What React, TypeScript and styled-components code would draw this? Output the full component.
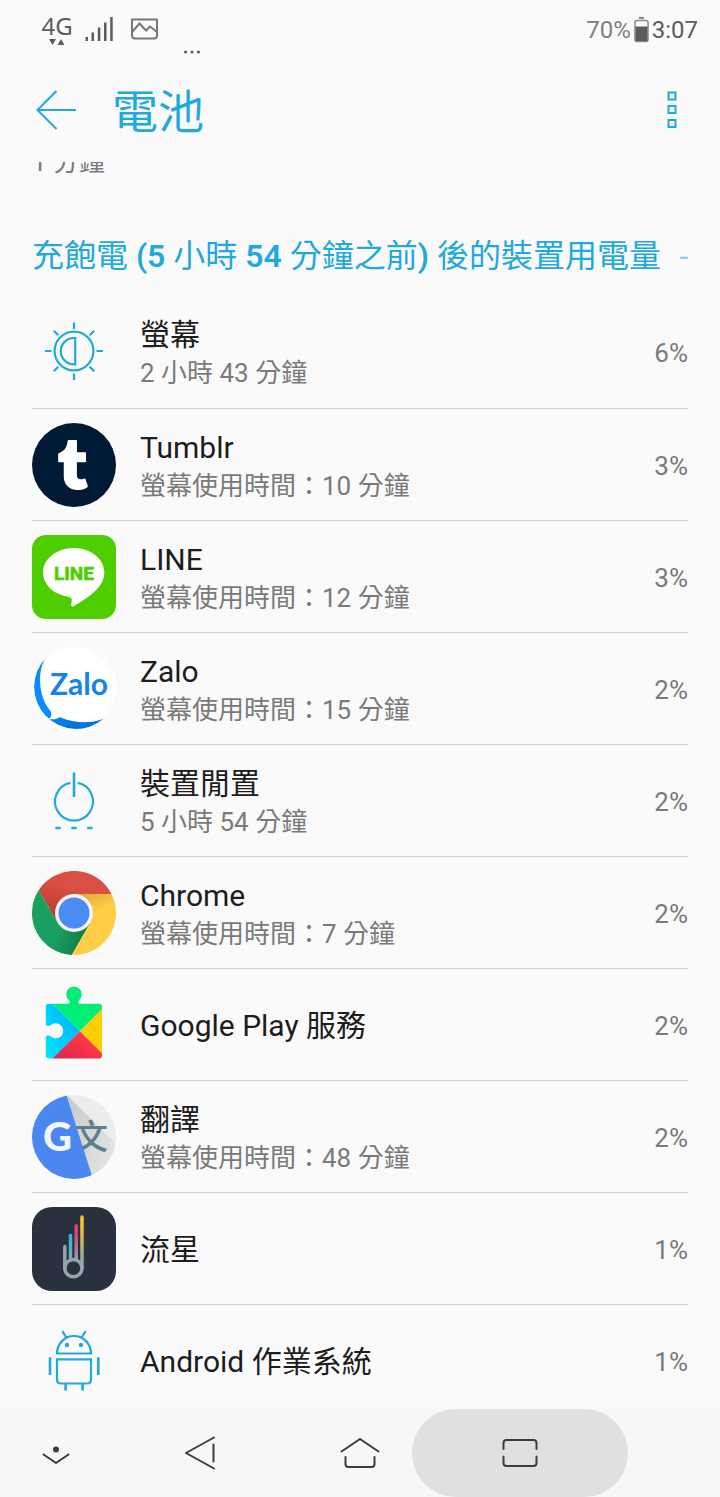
import React from "react";
import styled, { createGlobalStyle } from "styled-components";
import { FaTumblr } from "react-icons/fa";

const ACCENT = "#1fa9dc";
const INK = "#1d1d1d";
const MUTED = "#7a7a7a";

const GlobalStyle = createGlobalStyle`
  * { box-sizing: border-box; }
  html, body { margin: 0; background: #fafafa; }
  body { font-family: Roboto, "Noto Sans CJK TC", sans-serif; color: ${INK}; }
  button { font: inherit; color: inherit; border: 0; background: none; padding: 0; cursor: pointer; }
  svg { display: block; }
`;

const Screen = styled.div`
  display: flex;
  flex-direction: column;
  height: 100vh;
  background: #fafafa;
`;

const StatusBar = styled.div`
  flex: none;
  display: flex;
  justify-content: space-between;
  height: 58px;
  padding: 0 22px 0 43px;
  color: #5c5c5c;
`;

const StatusLeft = styled.div`
  display: flex;
  align-items: center;
  gap: 14px;
`;

const StatusRight = styled.div`
  display: flex;
  align-items: center;
  gap: 3px;
  padding-top: 2px;
  font-size: 24px;
  line-height: 28px;
`;

const BatteryLevel = styled.span`
  color: #808080;
`;

const Network = styled.div`
  display: flex;
  flex-direction: column;
  align-items: center;
  width: 28px;
  font: 24px/26px "Noto Sans", sans-serif;
`;

const MoreDots = styled.svg`
  align-self: flex-end;
`;

const AppBar = styled.header`
  flex: none;
  display: flex;
  align-items: center;
  height: 104px;
  padding: 0 28px 0 32px;
  color: ${ACCENT};
`;

const BarButton = styled.button`
  display: grid;
  place-items: center;
  width: 48px;
  height: 48px;
  &:last-child { width: 40px; }
`;

const Title = styled.h1`
  flex: 1;
  margin: 0;
  padding: 4px 0 0 32px;
  font-size: 46px;
  line-height: 56px;
  font-weight: 400;
`;

const Content = styled.main`
  flex: 1;
  min-height: 0;
  overflow-y: auto;
  scrollbar-width: none;
  padding: 0 32px;
`;

const ScrolledLine = styled.div`
  display: flex;
  align-items: flex-end;
  height: 18px;
  overflow: hidden;
  color: ${MUTED};
  font-size: 26px;
  line-height: 36px;
`;

const SectionTitle = styled.h2`
  display: flex;
  justify-content: space-between;
  margin: 56px 0 20px;
  color: ${ACCENT};
  font-size: 32px;
  line-height: 40px;
  font-weight: 400;
  white-space: nowrap;
  strong { font-weight: 600; }
`;

const Fading = styled.span`
  opacity: 0.5;
`;

const List = styled.ul`
  list-style: none;
  margin: 0;
  padding: 0;
`;

const Row = styled.li`
  display: flex;
  align-items: center;
  height: 112px;
  border-bottom: 1px solid #d0d0d0;
  &:first-child { height: 113px; }
  &:last-child { border-bottom: 0; }
`;

const RowIcon = styled.svg.attrs({ width: 84, height: 84, viewBox: "0 0 84 84", "aria-hidden": true })`
  flex: none;
`;

const RowText = styled.div`
  flex: 1;
  min-width: 0;
  padding: 2px 0 0 24px;
`;

const Name = styled.div`
  font-size: 30px;
  line-height: 40px;
`;

const Detail = styled.div`
  color: ${MUTED};
  font-size: 26px;
  line-height: 36px;
`;

const Percent = styled.span`
  padding-top: 2px;
  color: ${MUTED};
  font-size: 26px;
  line-height: 36px;
`;

const NavBar = styled.nav`
  flex: none;
  display: grid;
  grid-template-columns: 3fr 4fr 4fr 4fr 3fr;
  height: 88px;
  background: #f7f7f7;
  color: #3c3c3c;
`;

const NavButton = styled.button<{ $pressed?: boolean; $start?: boolean }>`
  display: grid;
  align-items: center;
  justify-content: ${(p) => (p.$start ? "start" : "center")};
  padding-left: ${(p) => (p.$start ? "40px" : "0")};
  margin: ${(p) => (p.$pressed ? "0 -28px" : "0")};
  border-radius: 44px;
  background: ${(p) => (p.$pressed ? "#e0e0e0" : "transparent")};
`;

const ScreenIcon = () => (
  <RowIcon fill="none" stroke={ACCENT} strokeWidth="2.2">
    <circle cx="42" cy="41" r="19.4" />
    <path d="M43.2 28V54.4H42A13.2 13.2 0 0 1 42 28Z" />
    <path d="M42 12.5V19M42 63.5V70M13 41H19.5M64.5 41H71M21.8 20.8L26.3 25.3M62.2 20.8L57.7 25.3M21.8 61.2L26.3 56.7M62.2 61.2L57.7 56.7" />
  </RowIcon>
);

const TumblrIcon = () => (
  <RowIcon>
    <circle cx="42" cy="42" r="42" fill="#001935" />
    <FaTumblr x="16" y="17" size={50} color="#fff" />
  </RowIcon>
);

const LineIcon = () => (
  <RowIcon>
    <rect width="84" height="84" rx="14" fill="#4ecd00" />
    <path
      fill="#fff"
      d="M41.7 13C24.8 13 11 24 11 37.6C11 49.7 22 59.8 37 61.9C39.3 62.4 40 63.2 39.7 65.5L39.2 69.5C39 71.4 40.2 72 42 70.9C50 66.4 60 60 66.5 52.5C70.3 48.2 72.4 43 72.4 37.6C72.4 24 58.6 13 41.7 13Z"
    />
    <text
      x="42"
      y="45"
      textAnchor="middle"
      fontFamily="Roboto"
      fontWeight="700"
      fontSize="19"
      fill="#4ecd00"
      stroke="#4ecd00"
      strokeWidth="0.6"
      strokeLinejoin="round"
    >
      LINE
    </text>
  </RowIcon>
);

const ZaloIcon = () => (
  <RowIcon>
    <defs>
      <linearGradient id="zalo" x1="0" y1="0.4" x2="0.5" y2="1">
        <stop offset="0.5" stopColor="#0a8bff" />
        <stop offset="1" stopColor="#0374de" />
      </linearGradient>
    </defs>
    <circle cx="42" cy="42" r="42" fill="#fff" />
    <path
      fill="url(#zalo)"
      d="M13.7 11C5.500 23 5.500 49 18.500 64C20 67 19.500 70 17 71.800C21 73 25 72 28 70.300C42 76 58 77.200 71.500 71.800A42 42 0 0 1 13.700 11Z"
    />
    <text x="47" y="47.5" textAnchor="middle" fontFamily="Lato" fontWeight="700" fontSize="30" fill="#1583ea">
      Zalo
    </text>
  </RowIcon>
);

const IdleIcon = () => (
  <RowIcon fill="none" stroke={ACCENT} strokeWidth="2.2">
    <path d="M38.3 23.9A19 19 0 1 0 45.7 23.9" />
    <path d="M42 13.5V38" strokeWidth="2.6" />
    <path d="M23.3 69H28.7M39.3 69H44.7M55.2 69H60.6" strokeWidth="2.6" />
  </RowIcon>
);

const ChromeIcon = () => (
  <RowIcon>
    <defs>
      <linearGradient id="chromeRed" x1="0.1" y1="0.9" x2="0.4" y2="0.3">
        <stop offset="0" stopColor="#b43a2e" />
        <stop offset="1" stopColor="#da4f43" />
      </linearGradient>
      <linearGradient id="chromeYellow" x1="0.4" y1="0" x2="0.5" y2="0.3">
        <stop offset="0" stopColor="#e6ae3e" />
        <stop offset="1" stopColor="#ffcd46" />
      </linearGradient>
      <linearGradient id="chromeGreen" x1="1" y1="0.7" x2="0.5" y2="0.5">
        <stop offset="0" stopColor="#0f7544" />
        <stop offset="1" stopColor="#1b9f60" />
      </linearGradient>
    </defs>
    <path fill="url(#chromeGreen)" d="M39.8 83.9A42 42 0 0 1 6.8 19L25.5 51.5H58.5Z" />
    <path fill="url(#chromeYellow)" d="M79.5 23A42 42 0 0 1 39.8 83.9L58.5 51.5L42 23Z" />
    <path fill="url(#chromeRed)" d="M6.8 19A42 42 0 0 1 79.5 23H42L25.5 51.5Z" />
    <circle cx="42" cy="42" r="19" fill="#f3f3f3" />
    <circle cx="42" cy="42" r="15.5" fill="#4b8bf4" />
  </RowIcon>
);

const PlayServicesIcon = () => (
  <RowIcon>
    <defs>
      <clipPath id="puzzle">
        <path d="M17 20.8H36C37.5 20.8 37.8 19.5 37.2 17.4A7.8 7.8 0 1 1 46.8 17.4C46.2 19.5 46.5 20.8 48 20.8H67Q70 20.8 70 23.8V72.5Q70 75.5 67 75.5H17Q13.8 75.5 13.8 72.5V54.5C13.8 52.6 16.5 52.2 18.3 53A7.5 7.5 0 1 0 18.3 42.6C16.5 43.4 13.8 43 13.8 41.1V23.8Q13.8 20.8 17 20.8Z" />
      </clipPath>
      <linearGradient id="playBlue" x1="1" y1="0" x2="0" y2="0.8">
        <stop offset="0" stopColor="#00a9ff" />
        <stop offset="1" stopColor="#00e1ff" />
      </linearGradient>
      <linearGradient id="playRed" x1="0.2" y1="1" x2="0.9" y2="0.5">
        <stop offset="0" stopColor="#e0264f" />
        <stop offset="1" stopColor="#ff3a44" />
      </linearGradient>
    </defs>
    <g clipPath="url(#puzzle)">
      <path fill="url(#playBlue)" d="M13 20.8H20.7L48 48.2L20.7 76H13Z" />
      <path fill="#00ee76" d="M20.7 20.8V0H70V26.2L48 48.2Z" />
      <path fill="#ffce00" d="M70 26.2V70.2L48 48.2Z" />
      <path fill="url(#playRed)" d="M70 70.2V76H20.2L48 48.2Z" />
    </g>
  </RowIcon>
);

const TranslateIcon = () => (
  <RowIcon>
    <defs>
      <clipPath id="disc">
        <circle cx="42" cy="42" r="42" />
      </clipPath>
      <linearGradient id="fold" x1="0" y1="0" x2="1" y2="0.8">
        <stop offset="0" stopColor="#c8c8c8" />
        <stop offset="1" stopColor="#e4e4e4" />
      </linearGradient>
    </defs>
    <g clipPath="url(#disc)">
      <rect width="84" height="84" fill="#ececec" />
      <path fill="url(#fold)" d="M35 0L84 49V84H61Z" />
      <text x="59" y="54" textAnchor="middle" fontFamily="Noto Sans CJK TC" fontWeight="500" fontSize="34" fill="#607d8b">
        文
      </text>
      <path fill="#4a87ee" d="M0 0H34.5L61 84H0Z" />
      <text x="25.5" y="56" textAnchor="middle" fontFamily="Lato" fontWeight="900" fontSize="40" fill="#f2f5fb">
        G
      </text>
    </g>
  </RowIcon>
);

const METEOR_TAILS = [
  { id: "tailTeal", color: "#35b9cf", x: 38.5, y: 28.5, end: 53 },
  { id: "tailPink", color: "#d8417e", x: 44.2, y: 18.8, end: 53 },
  { id: "tailYellow", color: "#f4c430", x: 50, y: 10, end: 61 },
];

const MeteorIcon = () => (
  <RowIcon fill="none" strokeLinecap="round" strokeWidth="3.5">
    <defs>
      {METEOR_TAILS.map((t) => (
        <linearGradient key={t.id} id={t.id} gradientUnits="userSpaceOnUse" x1="0" x2="0" y1={t.y + 8} y2="54">
          <stop offset="0" stopColor={t.color} />
          <stop offset="1" stopColor="#94a5ae" />
        </linearGradient>
      ))}
    </defs>
    <rect width="84" height="84" rx="20" fill="#2a313e" />
    <path d="M32.8 39.5V61" stroke="#94a5ae" />
    {METEOR_TAILS.map((t) => (
      <path key={t.id} d={`M${t.x} ${t.y}V${t.end}`} stroke={`url(#${t.id})`} />
    ))}
    <circle cx="41.4" cy="61.2" r="8.6" stroke="#94a5ae" />
  </RowIcon>
);

const AndroidIcon = () => (
  <RowIcon fill="none" stroke={ACCENT} strokeWidth="2.2">
    <path d="M25 34.5A17 17.5 0 0 1 59 34.5Z" />
    <path d="M30.4 12L34.3 18.8M53.6 12L49.7 18.8" />
    <path d="M25 40.3H59V60.5Q59 64.5 55 64.5H29Q25 64.5 25 60.5Z" />
    <path d="M18 38.3V56M66.3 38.3V56M33.6 64.5V71.5M50.6 64.5V71.5" strokeWidth="2.6" />
    <circle cx="35" cy="26" r="2.2" fill={ACCENT} stroke="none" />
    <circle cx="49" cy="26" r="2.2" fill={ACCENT} stroke="none" />
  </RowIcon>
);

const ENTRIES = [
  { Icon: ScreenIcon, name: "螢幕", detail: "2 小時 43 分鐘", percent: "6%" },
  { Icon: TumblrIcon, name: "Tumblr", detail: "螢幕使用時間：10 分鐘", percent: "3%" },
  { Icon: LineIcon, name: "LINE", detail: "螢幕使用時間：12 分鐘", percent: "3%" },
  { Icon: ZaloIcon, name: "Zalo", detail: "螢幕使用時間：15 分鐘", percent: "2%" },
  { Icon: IdleIcon, name: "裝置閒置", detail: "5 小時 54 分鐘", percent: "2%" },
  { Icon: ChromeIcon, name: "Chrome", detail: "螢幕使用時間：7 分鐘", percent: "2%" },
  { Icon: PlayServicesIcon, name: "Google Play 服務", percent: "2%" },
  { Icon: TranslateIcon, name: "翻譯", detail: "螢幕使用時間：48 分鐘", percent: "2%" },
  { Icon: MeteorIcon, name: "流星", percent: "1%" },
  { Icon: AndroidIcon, name: "Android 作業系統", percent: "1%" },
];

export default function App() {
  return (
    <Screen lang="zh-TW">
      <GlobalStyle />
      <StatusBar>
        <StatusLeft>
          <Network>
            4G
            <svg width="16" height="6" viewBox="0 0 16 6" fill="currentColor">
              <path d="M0 0H7L3.5 6ZM8.5 6H15.5L12 0Z" />
            </svg>
          </Network>
          <svg width="28" height="26" viewBox="0 0 28 26" fill="currentColor">
            <path d="M0.5 21H3V25H0.5ZM6.5 16.5H9V25H6.5ZM12.8 11.5H15.3V25H12.8ZM19 6.5H21.5V25H19ZM25.2 1H27.7V25H25.2Z" />
          </svg>
          <svg width="34" height="22" viewBox="-1 0 34 22" fill="none" stroke="#777" strokeWidth="2">
            <path d="M4 1.5H29V17.5Q29 20.5 26 20.5H7Q4 20.5 4 17.5Z" strokeLinejoin="round" />
            <path d="M4 14L11.5 5.5L18 12.5L22 8.5L29 14" />
          </svg>
          <MoreDots width="32" height="8" viewBox="0 0 32 8" fill="currentColor">
            <circle cx="10.5" cy="2" r="1.6" />
            <circle cx="17" cy="2" r="1.6" />
            <circle cx="23.5" cy="2" r="1.6" />
          </MoreDots>
        </StatusLeft>
        <StatusRight>
          <BatteryLevel>70%</BatteryLevel>
          <svg width="15" height="26" viewBox="0 0 15 26">
            <path d="M5 1H10" stroke="#888" strokeWidth="2" />
            <rect x="1" y="3.5" width="13" height="21" rx="2" fill="#fff" stroke="#888" strokeWidth="1.5" />
            <path d="M1.5 9.5H13.5V24H1.5Z" fill="#5c5c5c" />
          </svg>
          <span>3:07</span>
        </StatusRight>
      </StatusBar>
      <AppBar>
        <BarButton aria-label="返回">
          <svg width="40" height="40" viewBox="0 0 40 40" fill="none" stroke="currentColor" strokeWidth="2">
            <path d="M40 20H1.5M20.5 1L1.5 20L20.5 39" />
          </svg>
        </BarButton>
        <Title>電池</Title>
        <BarButton aria-label="更多選項">
          <svg width="10" height="38" viewBox="0 0 10 38" fill="none" stroke="currentColor" strokeWidth="2">
            <path d="M1.5 1.5H8.5V8.5H1.5ZM1.5 15H8.5V22H1.5ZM1.5 29H8.5V36H1.5Z" />
          </svg>
        </BarButton>
      </AppBar>
      <Content>
        <ScrolledLine>1 分鐘</ScrolledLine>
        <SectionTitle>
          <span>
            充飽電 <strong>(5</strong> 小時 <strong>54</strong> 分鐘之前<strong>)</strong> 後的裝置用電量
          </span>
          <Fading>-</Fading>
        </SectionTitle>
        <List>
          {ENTRIES.map(({ Icon, name, detail, percent }) => (
            <Row key={name}>
              <Icon />
              <RowText>
                <Name>{name}</Name>
                {detail && <Detail>{detail}</Detail>}
              </RowText>
              <Percent>{percent}</Percent>
            </Row>
          ))}
        </List>
      </Content>
      <NavBar>
        <NavButton $start aria-label="隱藏導覽列">
          <svg width="32" height="32" viewBox="0 0 32 32" fill="none" stroke="currentColor" strokeWidth="2" strokeLinecap="round" strokeLinejoin="round">
            <path d="M3.5 17.5L16 26L28.5 17.5" />
            <circle cx="16" cy="12.5" r="3" fill="currentColor" stroke="none" />
          </svg>
        </NavButton>
        <NavButton aria-label="上一頁">
          <svg width="32" height="34" viewBox="0 0 32 34" fill="none" stroke="currentColor" strokeWidth="2" strokeLinecap="round" strokeLinejoin="round">
            <path d="M30 1.5L2 17L30 32.5M29.5 8.5V25.5" />
          </svg>
        </NavButton>
        <NavButton aria-label="首頁">
          <svg width="40" height="32" viewBox="0 0 40 32" fill="none" stroke="currentColor" strokeWidth="2" strokeLinecap="round" strokeLinejoin="round">
            <path d="M1.5 14.5L20 2L38.5 14.5M5.5 20V27Q5.5 30 8.5 30H31.5Q34.5 30 34.5 27V20" />
          </svg>
        </NavButton>
        <NavButton $pressed aria-label="最近使用的應用程式">
          <svg width="36" height="30" viewBox="0 0 36 30" fill="none" stroke="currentColor" strokeWidth="2" strokeLinecap="round">
            <path d="M1.5 11V5Q1.5 2 4.5 2H31.5Q34.5 2 34.5 5V11M1.5 18.5V25Q1.5 28 4.5 28H31.5Q34.5 28 34.5 25V18.5" />
          </svg>
        </NavButton>
      </NavBar>
    </Screen>
  );
}
